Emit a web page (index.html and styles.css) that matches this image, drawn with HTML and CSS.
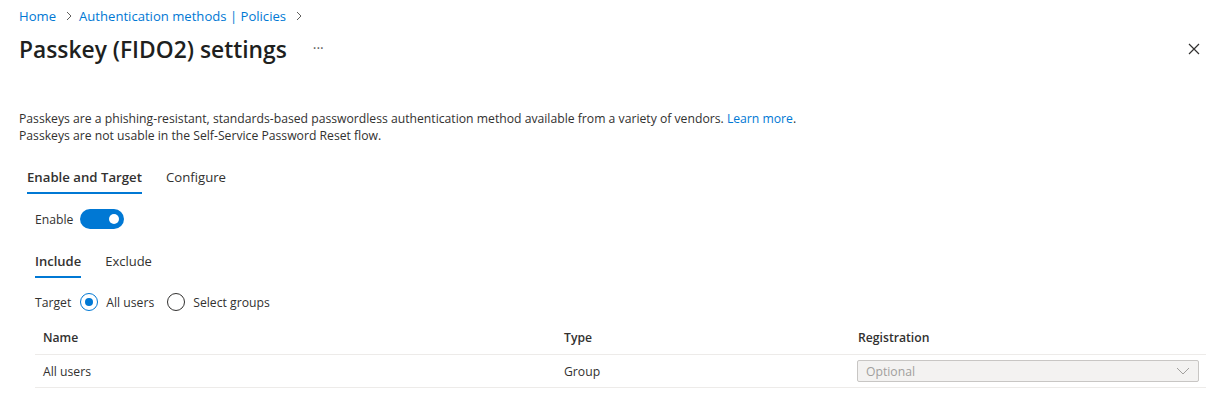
FILE: index.html
```html
<!DOCTYPE html>
<html lang="en">
  <head>
    <meta charset="UTF-8" />
    <title>Passkey (FIDO2) settings</title>
    <link rel="stylesheet" href="styles.css">
  </head>
  <body>
    <div class="page">
      <nav class="crumbs">
        <a href="#">Home</a>
        <span class="chev">
          <svg width="8" height="10" viewBox="0 0 8 10"><path d="M2 1l4 4-4 4" fill="none" stroke="#605e5c" stroke-width="1"/></svg>
        </span>
        <a href="#">Authentication methods | Policies</a>
        <span class="chev">
          <svg width="8" height="10" viewBox="0 0 8 10"><path d="M2 1l4 4-4 4" fill="none" stroke="#605e5c" stroke-width="1"/></svg>
        </span>
      </nav>

      <header class="title-row">
        <h1>Passkey (FIDO2) settings</h1>
        <span class="more">&middot;&middot;&middot;</span>
        <span class="close">
          <svg width="12" height="12" viewBox="0 0 12 12"><path d="M1 1l10 10M11 1L1 11" stroke="#323130" stroke-width="1.2"/></svg>
        </span>
      </header>

      <section class="desc">
        <p>Passkeys are a phishing-resistant, standards-based passwordless authentication method available from a variety of vendors. <a href="#">Learn more</a>.</p>
        <p>Passkeys are not usable in the Self-Service Password Reset flow.</p>
      </section>

      <div class="tabs main-tabs">
        <span class="tab active">Enable and Target</span>
        <span class="tab">Configure</span>
      </div>

      <div class="panel">
        <div class="enable-row">
          <span>Enable</span>
          <span class="toggle"><span class="knob"></span></span>
        </div>

        <div class="tabs sub-tabs">
          <span class="tab active">Include</span>
          <span class="tab">Exclude</span>
        </div>

        <div class="target-row">
          <span>Target</span>
          <label class="radio checked"><span class="dot"></span>All users</label>
          <label class="radio"><span class="dot"></span>Select groups</label>
        </div>

        <div class="grid">
          <div class="grid-row head">
            <div>Name</div>
            <div>Type</div>
            <div>Registration</div>
          </div>
          <div class="grid-row">
            <div>All users</div>
            <div>Group</div>
            <div>
              <div class="dropdown">
                <span>Optional</span>
                <svg width="14" height="8" viewBox="0 0 14 8"><path d="M1 1l6 6 6-6" fill="none" stroke="#a19f9d" stroke-width="1"/></svg>
              </div>
            </div>
          </div>
        </div>
      </div>
    </div>
  </body>
</html>
```

FILE: styles.css
```css
body,
html {
  margin: 0;
  padding: 0;
  background: #fff;
  color: #323130;
  font-family: "Open Sans", "Noto Sans", sans-serif;
  font-size: 12.2px;
}
a {
  color: #0078d4;
  text-decoration: none;
}
.page {
  padding: 6px 19px 0 19px;
}
.crumbs {
  display: flex;
  align-items: center;
  height: 20px;
  font-size: 13.1px;
}
.chev {
  display: inline-flex;
  margin: 0 6px 0 9px;
}
.title-row {
  display: flex;
  align-items: center;
  height: 46px;
}
.title-row h1 {
  margin: 0;
  font-size: 22.8px;
  font-weight: 600;
  color: #201f1e;
}
.more {
  margin-left: 26px;
  font-size: 14px;
  color: #605e5c;
  position: relative;
  top: -2px;
}
.close {
  margin-left: auto;
  margin-right: 6px;
  display: inline-flex;
}
.desc {
  margin-top: 38px;
}
.desc p {
  margin: 0;
  line-height: 17px;
}
.tabs {
  display: flex;
  gap: 24px;
}
.tab {
  padding: 8px 0 6px;
  border-bottom: 2px solid transparent;
  font-size: 13.2px;
}
.sub-tabs .tab {
  font-size: 13px;
}
.tab.active {
  font-weight: 600;
  border-bottom-color: #0078d4;
}
.main-tabs {
  margin-top: 16px;
  padding-left: 8px;
}
.panel {
  padding-left: 16px;
}
.enable-row {
  display: flex;
  align-items: center;
  gap: 7px;
  margin-top: 13px;
  height: 24px;
}
.toggle {
  width: 44px;
  height: 20px;
  border-radius: 10px;
  background: #0078d4;
  position: relative;
}
.knob {
  position: absolute;
  right: 5px;
  top: 5px;
  width: 10px;
  height: 10px;
  border-radius: 50%;
  background: #fff;
}
.sub-tabs {
  margin-top: 13px;
}
.target-row {
  display: flex;
  align-items: center;
  margin-top: 12px;
  height: 24px;
}
.radio {
  display: flex;
  align-items: center;
  gap: 8px;
  margin-left: 9px;
  margin-right: 4px;
}
.dot {
  width: 18px;
  height: 18px;
  border: 1px solid #323130;
  border-radius: 50%;
  box-sizing: border-box;
  position: relative;
}
.radio.checked .dot {
  border-color: #0078d4;
}
.radio.checked .dot::after {
  content: "";
  position: absolute;
  left: 4px;
  top: 4px;
  width: 8px;
  height: 8px;
  border-radius: 50%;
  background: #0078d4;
}
.grid {
  margin-top: 6px;
}
.grid-row {
  display: grid;
  grid-template-columns: 521px 294px 1fr;
  align-items: center;
  border-bottom: 1px solid #edebe9;
  height: 32px;
  padding-left: 8px;
}
.grid-row.head {
  font-weight: 600;
  height: 34px;
}
.dropdown {
  display: flex;
  align-items: center;
  justify-content: space-between;
  height: 22px;
  box-sizing: border-box;
  width: 342px;
  margin-left: -1px;
  padding: 0 8px;
  border: 1px solid #c8c6c4;
  border-radius: 2px;
  background: #f3f2f1;
  color: #a19f9d;
}
```
